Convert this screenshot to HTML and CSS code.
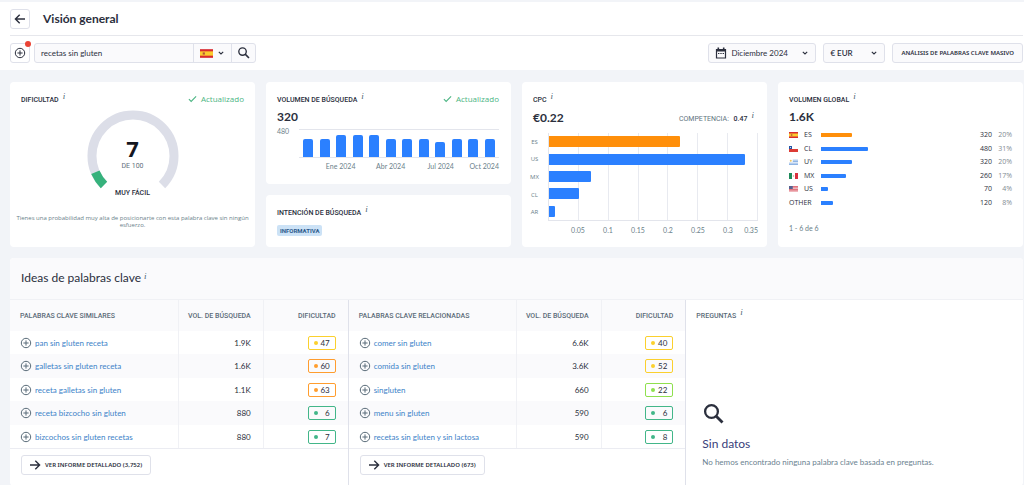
FILE: index.html
```html
<!DOCTYPE html>
<html lang="es">
<head>
<meta charset="utf-8">
<meta name="viewport" content="width=device-width, initial-scale=1">
<title>Visión general</title>
<link rel="stylesheet" href="styles.css">
</head>
<body>
<svg class="sprite" aria-hidden="true">
  <symbol id="plus" viewBox="0 0 12 12"><circle cx="6" cy="6" r="4.7" fill="none" stroke="currentColor"/><path d="M6 3.4v5.2M3.4 6h5.2" fill="none" stroke="currentColor"/></symbol>
  <symbol id="chev" viewBox="0 0 8 8"><path d="M1.8 2.8 4 5l2.2-2.2" fill="none" stroke="currentColor" stroke-width="1.1"/></symbol>
  <symbol id="lens" viewBox="0 0 24 24"><circle cx="9.5" cy="9.5" r="6.4" fill="none" stroke="currentColor" stroke-width="2.3"/><path d="m14 14 6.5 6.5" stroke="currentColor" stroke-width="2.8"/></symbol>
  <symbol id="check" viewBox="0 0 10 8"><path d="m1 4.2 2.5 2.5L9 1" fill="none" stroke="currentColor" stroke-width="1.2"/></symbol>
  <symbol id="arrow" viewBox="0 0 12 12"><path d="M1 6h9.5M6.3 1.7 10.6 6l-4.3 4.3" fill="none" stroke="currentColor" stroke-width="1.4"/></symbol>
  <symbol id="es" viewBox="0 0 12 8"><path fill="#d92b2f" d="M0 0h12v8H0z"/><path fill="#fbcb2f" d="M0 2h12v4H0z"/><path fill="#b5523a" d="M2.5 3h2v2h-2z"/></symbol>
  <symbol id="cl" viewBox="0 0 12 8"><path fill="#fff" d="M0 0h12v4H0z"/><path fill="#dc3b35" d="M0 4h12v4H0z"/><path fill="#2456a6" d="M0 0h4v4H0z"/><path fill="#fff" d="M1.6 1.3h1v1.4h-1z"/></symbol>
  <symbol id="uy" viewBox="0 0 12 8"><path fill="#fff" d="M0 0h12v8H0z"/><path fill="#6c9ddc" d="M5 1h7v1.1H5zM5 3h7v1.1H5zM0 5h12v1.1H0zM0 7h12v1H0z"/><circle cx="2.4" cy="2.3" r="1.3" fill="#f1c65b"/></symbol>
  <symbol id="mx" viewBox="0 0 12 8"><path fill="#fff" d="M0 0h12v8H0z"/><path fill="#1e8a5a" d="M0 0h4v8H0z"/><path fill="#d9303e" d="M8 0h4v8H8z"/><circle cx="6" cy="4" r="1" fill="#c9a37c"/></symbol>
  <symbol id="us" viewBox="0 0 12 8"><path fill="#f6d9dc" d="M0 0h12v8H0z"/><path fill="#d9525e" d="M0 0h12v1H0zM0 2h12v1H0zM0 4h12v1H0zM0 6h12v1H0z"/><path fill="#55618f" d="M0 0h5v4H0z"/></symbol>
</svg>

<header class="top">
  <div class="title-row">
    <button class="btn back" aria-label="Volver"><svg class="ic12 flip"><use href="#arrow"/></svg></button>
    <h1>Visión general</h1>
  </div>
  <div class="toolbar">
    <button class="btn add" aria-label="Añadir"><svg class="ic12"><use href="#plus"/></svg><span class="dot"></span></button>
    <form class="search">
      <input type="text" aria-label="Palabra clave" value="recetas sin gluten">
      <button type="button" class="country" aria-label="País" aria-haspopup="listbox"><svg class="flag"><use href="#es"/></svg><svg class="ic8"><use href="#chev"/></svg></button>
      <button type="button" class="go" aria-label="Buscar"><svg class="ic14"><use href="#lens"/></svg></button>
    </form>
    <label class="btn pick month">
      <svg class="ic12" viewBox="0 0 12 12"><path d="M1.5 2.5h9v8.5h-9z" fill="none" stroke="currentColor" stroke-width="1.2"/><path d="M1 2h10v2.6H1zM2.5.4h1.6v2H2.5zM7.9.4h1.6v2H7.9z" fill="currentColor"/><path d="M3 6.5h1.4M5.3 6.5h1.4M7.6 6.5H9" stroke="currentColor"/></svg>
      <select aria-label="Mes"><option>Diciembre 2024</option></select>
      <svg class="ic8"><use href="#chev"/></svg>
    </label>
    <label class="btn pick money">
      <select aria-label="Moneda"><option>€ EUR</option></select>
      <svg class="ic8"><use href="#chev"/></svg>
    </label>
    <button class="btn bulk">ANÁLISIS DE PALABRAS CLAVE MASIVO</button>
  </div>
</header>

<main>
  <section class="cards">
    <article class="card difficulty">
      <div class="card-head"><h2>DIFICULTAD<i class="info">i</i></h2><span class="fresh"><svg class="tick"><use href="#check"/></svg>Actualizado</span></div>
      <div class="gauge">
        <svg class="dial" viewBox="0 0 92 80">
          <path class="track" pathLength="100" d="M17 75A41 41 0 1 1 75 75"/>
          <path class="value" pathLength="100" d="M17 75A41 41 0 1 1 75 75"/>
        </svg>
        <div class="score"><strong>7</strong><span>DE 100</span></div>
      </div>
      <h3 class="grade">MUY FÁCIL</h3>
      <p class="note">Tienes una probabilidad muy alta de posicionarte con esta palabra clave sin ningún esfuerzo.</p>
    </article>

    <div class="stack">
      <article class="card volume">
        <div class="card-head"><h2>VOLUMEN DE BÚSQUEDA<i class="info">i</i></h2><span class="fresh"><svg class="tick"><use href="#check"/></svg>Actualizado</span></div>
        <strong class="big">320</strong>
        <div class="months">
          <span class="ymax">480</span>
          <div class="plot">
            <b class="m"></b><b class="m"></b><b class="m tall"></b><b class="m tall"></b><b class="m tall"></b><b class="m"></b><b class="m"></b><b class="m"></b><b class="m low"></b><b class="m"></b><b class="m"></b><b class="m"></b>
          </div>
          <div class="month-names"><span>Ene 2024</span><span>Abr 2024</span><span>Jul 2024</span><span class="end">Oct 2024</span></div>
        </div>
      </article>
      <article class="card intent">
        <h2>INTENCIÓN DE BÚSQUEDA<i class="info">i</i></h2>
        <span class="tag">INFORMATIVA</span>
      </article>
    </div>

    <article class="card cpc">
      <div class="card-head"><h2>CPC<i class="info">i</i></h2></div>
      <div class="cpc-line"><strong class="big">€0.22</strong><span class="comp">COMPETENCIA: <b>0.47</b><i class="info">i</i></span></div>
      <div class="hchart">
        <div class="names"><span>ES</span><span>US</span><span>MX</span><span>CL</span><span>AR</span></div>
        <div class="area">
          <b class="h hot" style="width:62.5%"></b><b class="h" style="width:94%"></b><b class="h" style="width:20%"></b><b class="h" style="width:14.3%"></b><b class="h" style="width:3%"></b>
        </div>
        <div class="ticks"><span>0.05</span><span>0.1</span><span>0.15</span><span>0.2</span><span>0.25</span><span>0.3</span><span>0.35</span></div>
      </div>
    </article>

    <article class="card global">
      <div class="card-head"><h2>VOLUMEN GLOBAL<i class="info">i</i></h2></div>
      <strong class="big">1.6K</strong>
      <ul class="countries">
        <li><svg class="mini"><use href="#es"/></svg><span>ES</span><div><b class="g hot" style="width:22%"></b></div><em>320</em><small>20%</small></li>
        <li><svg class="mini"><use href="#cl"/></svg><span>CL</span><div><b class="g" style="width:33%"></b></div><em>480</em><small>31%</small></li>
        <li><svg class="mini"><use href="#uy"/></svg><span>UY</span><div><b class="g" style="width:22%"></b></div><em>320</em><small>20%</small></li>
        <li><svg class="mini"><use href="#mx"/></svg><span>MX</span><div><b class="g" style="width:18%"></b></div><em>260</em><small>17%</small></li>
        <li><svg class="mini"><use href="#us"/></svg><span>US</span><div><b class="g" style="width:5%"></b></div><em>70</em><small>4%</small></li>
        <li><span class="other">OTHER</span><div><b class="g" style="width:8.3%"></b></div><em>120</em><small>8%</small></li>
      </ul>
      <p class="range">1 - 6 de 6</p>
    </article>
  </section>

  <section class="ideas">
    <h2 class="ideas-title">Ideas de palabras clave<i class="info">i</i></h2>
    <div class="panes">
      <div class="pane">
        <table>
          <thead><tr><th>PALABRAS CLAVE SIMILARES</th><th>VOL. DE BÚSQUEDA</th><th>DIFICULTAD</th></tr></thead>
          <tbody>
            <tr><td><a href="#"><svg class="ic12"><use href="#plus"/></svg>pan sin gluten receta</a></td><td>1.9K</td><td><span class="kd yellow">47</span></td></tr>
            <tr><td><a href="#"><svg class="ic12"><use href="#plus"/></svg>galletas sin gluten receta</a></td><td>1.6K</td><td><span class="kd orange">60</span></td></tr>
            <tr><td><a href="#"><svg class="ic12"><use href="#plus"/></svg>receta galletas sin gluten</a></td><td>1.1K</td><td><span class="kd orange">63</span></td></tr>
            <tr><td><a href="#"><svg class="ic12"><use href="#plus"/></svg>receta bizcocho sin gluten</a></td><td>880</td><td><span class="kd green">6</span></td></tr>
            <tr><td><a href="#"><svg class="ic12"><use href="#plus"/></svg>bizcochos sin gluten recetas</a></td><td>880</td><td><span class="kd green">7</span></td></tr>
          </tbody>
        </table>
        <div class="foot"><button class="btn report"><svg class="ic12"><use href="#arrow"/></svg>VER INFORME DETALLADO (3,752)</button></div>
      </div>
      <div class="pane">
        <table>
          <thead><tr><th>PALABRAS CLAVE RELACIONADAS</th><th>VOL. DE BÚSQUEDA</th><th>DIFICULTAD</th></tr></thead>
          <tbody>
            <tr><td><a href="#"><svg class="ic12"><use href="#plus"/></svg>comer sin gluten</a></td><td>6.6K</td><td><span class="kd yellow">40</span></td></tr>
            <tr><td><a href="#"><svg class="ic12"><use href="#plus"/></svg>comida sin gluten</a></td><td>3.6K</td><td><span class="kd yellow">52</span></td></tr>
            <tr><td><a href="#"><svg class="ic12"><use href="#plus"/></svg>singluten</a></td><td>660</td><td><span class="kd lime">22</span></td></tr>
            <tr><td><a href="#"><svg class="ic12"><use href="#plus"/></svg>menu sin gluten</a></td><td>590</td><td><span class="kd green">6</span></td></tr>
            <tr><td><a href="#"><svg class="ic12"><use href="#plus"/></svg>recetas sin gluten y sin lactosa</a></td><td>590</td><td><span class="kd green">8</span></td></tr>
          </tbody>
        </table>
        <div class="foot"><button class="btn report"><svg class="ic12"><use href="#arrow"/></svg>VER INFORME DETALLADO (673)</button></div>
      </div>
      <div class="pane questions">
        <h3>PREGUNTAS<i class="info">i</i></h3>
        <div class="empty">
          <svg class="ic24"><use href="#lens"/></svg>
          <h4>Sin datos</h4>
          <p>No hemos encontrado ninguna palabra clave basada en preguntas.</p>
        </div>
      </div>
    </div>
  </section>
</main>
</body>
</html>
```
FILE: styles.css
```css
* { box-sizing: border-box; }
:root { --label: Roboto, "Noto Sans", sans-serif; --data: "Open Sans", "Noto Sans", sans-serif; }
body {
  margin: 0;
  background: #f2f4f8;
  color: #2b2f3d;
  font: 8px/12px Lato, "Noto Sans", sans-serif;
}
h1, h2, h3, h4, p, ul { margin: 0; padding: 0; }
button, input, select { font: inherit; color: inherit; margin: 0; }
svg { flex: none; display: block; }
.sprite { position: absolute; width: 0; height: 0; }
.ic8 { width: 8px; height: 8px; }
.ic12 { width: 12px; height: 12px; }
.ic14 { width: 14px; height: 14px; }
.ic24 { width: 24px; height: 24px; }
.flip { transform: rotate(180deg); }

.btn {
  display: flex;
  align-items: center;
  height: 20px;
  padding: 0;
  border: 1px solid #dfe1ea;
  border-radius: 3px;
  background: #fff;
}
.info {
  margin-left: 4px;
  color: #4d6573;
  font: italic 9px/7px "Liberation Serif", serif;
  vertical-align: 3px;
}

.top { margin-top: 2px; padding: 0 1px 0 10px; background: #fff; }
.title-row {
  display: flex;
  align-items: center;
  gap: 13px;
  height: 34px;
  border-bottom: 1px solid #e6e7ec;
}
.back { width: 20px; justify-content: center; }
h1 { font-size: 12px; line-height: 16px; font-weight: 700; }
.toolbar { display: flex; align-items: center; height: 34px; }
.add { position: relative; width: 20px; justify-content: center; }
.dot {
  position: absolute;
  top: -3px;
  right: -2px;
  width: 6px;
  height: 6px;
  border-radius: 50%;
  background: #ea4335;
}
.search {
  display: flex;
  width: 222px;
  height: 20px;
  margin: 0 auto 0 4px;
  border: 1px solid #dfe1ea;
  border-radius: 3px;
  background: #fafafc;
}
.search input { flex: 1; min-width: 0; padding: 0 6px; border: 0; background: none; outline: 0; }
.search button { display: flex; align-items: center; justify-content: center; padding: 0; border: 0; border-left: 1px solid #dfe1ea; background: none; }
.country { width: 38px; gap: 4px; }
.go { width: 24px; }
.flag { width: 13px; height: 9px; }
.pick { background: #fafafc; padding: 0 6px; gap: 4px; }
.pick select { flex: 1; min-width: 0; padding: 0; border: 0; background: none; appearance: none; }
.month { width: 108px; }
.money { width: 62px; margin: 0 7px; font-weight: 600; }
.bulk { padding: 0 8px; background: #fafafc; font: 600 6px/12px "Noto Sans", sans-serif; }

main { padding: 12px 1px 0 10px; }
.cards { display: grid; grid-template-columns: repeat(4, 1fr); gap: 11px; }
.card { padding: 11px; border-radius: 4px; background: #fff; }
.card-head { display: flex; justify-content: space-between; height: 12px; }
.card h2, .questions h3 { font: 500 7px/12px var(--label); }
.fresh { display: flex; align-items: center; gap: 4px; color: #4bb583; font: 8px/12px var(--data); }
.tick { width: 9px; height: 8px; }
.big { display: block; font-size: 12px; line-height: 16px; font-weight: 700; }

.difficulty { display: flex; flex-direction: column; text-align: center; padding: 11px 7px; }
.difficulty .card-head { padding: 0 4px; }
.gauge { display: grid; justify-items: center; margin-top: 5px; }
.gauge > * { grid-area: 1 / 1; }
.dial { width: 92px; height: 80px; fill: none; stroke-width: 9; }
.track { stroke: #dcdee8; }
.value { stroke: #36b27c; stroke-dasharray: 8 100; }
.score { align-self: center; display: flex; flex-direction: column; padding-top: 8px; color: #5f6f7c; font: 7px/12px var(--label); }
.score strong { color: #14161f; font: 700 22px/24px "Noto Sans", sans-serif; }
.card .grade { margin-top: -2px; font: 500 7px/10px var(--label); }
.note { margin: 17px -4px 0; color: #6b7f8a; font: 6px/7px var(--data); }

.stack { display: flex; flex-direction: column; gap: 11px; }
.volume { flex: 1; padding-right: 12px; }
.volume .big, .global .big { margin-top: 4px; }
.months { display: grid; grid-template-columns: 22px 1fr; margin-top: 4px; color: #6b7f8a; font-size: 7px; }
.ymax { line-height: 8px; margin-top: -2px; }
.plot {
  display: flex;
  align-items: flex-end;
  justify-content: space-between;
  height: 29px;
  padding: 0 4px;
  border: solid #e3e5ec;
  border-width: 1px 0;
}
.m { width: 10px; height: 18px; border-radius: 2px 2px 0 0; background: #2b80ff; }
.m.tall { height: 22px; }
.m.low { height: 15px; }
.month-names { grid-column: 2; display: grid; grid-template-columns: 1fr repeat(3, 3fr) 2fr; margin-top: 2px; text-align: center; white-space: nowrap; }
.month-names span:first-child { grid-column: 2; }
.month-names .end { justify-self: end; }
.intent { height: 52px; }
.tag { display: block; width: fit-content; margin-top: 6px; padding: 0 3px; border-radius: 2px; background: #cce2f6; color: #2d5a8c; font: 700 6px/11px var(--label); }

.cpc { padding-right: 9px; }
.cpc-line { display: flex; justify-content: space-between; align-items: center; margin-top: 5px; }
.comp { padding-right: 4px; color: #5f7480; font: 7px/12px var(--label); }
.comp b { margin-left: 3px; color: #2b2f3d; font-weight: 500; }
.hchart { display: grid; grid-template-columns: 15px 1fr; margin-top: 7px; color: #6b7f8a; font-size: 7px; }
.names, .area { display: grid; grid-template-rows: repeat(5, 1fr); align-items: center; height: 88px; }
.names { justify-items: center; margin: 0 8px 0 -4px; font: 6px/12px var(--data); }
.area {
  border: solid #e3e5ec;
  border-width: 0 0 1px 1px;
  background: repeating-linear-gradient(90deg, transparent 0 calc(100% / 7 - 1px), #e8eaf0 calc(100% / 7 - 1px) calc(100% / 7));
}
.h { height: 11px; border-radius: 0 1px 1px 0; background: #2b80ff; }
.hot.hot { background: #ff8f0a; }
.ticks { grid-column: 2; display: grid; grid-template-columns: 1fr repeat(6, 2fr) 1fr; margin-top: 3px; text-align: center; }
.ticks span { min-width: 0; }
.ticks span:first-child { grid-column: 2; }
.ticks span:last-child { justify-self: end; }

.global { padding-bottom: 13px; }
.countries { margin-top: 3px; list-style: none; font: 7px/12px var(--data); }
.countries li { display: grid; grid-template-columns: 9px 17px 1fr 30px 20px; align-items: center; height: 14px; }
.countries li:nth-child(even) { height: 13px; }
.mini { width: 9px; height: 6px; }
.countries span { padding-left: 6px; }
.countries .other { grid-column: span 2; padding: 0; }
.countries li div { padding-left: 6px; }
.g { display: block; height: 4px; border-radius: 0 1px 1px 0; background: #2b80ff; }
.countries em { font-style: normal; text-align: right; }
.countries small { color: #7f8b92; font-size: inherit; text-align: right; }
.range { margin-top: 13px; color: #6b7f8a; font-size: 7px; }

.ideas { margin-top: 11px; border-radius: 4px; background: #fff; overflow: hidden; }
.ideas-title { padding: 12px 11px 13px; background: #fafafc; font-size: 12px; line-height: 16px; font-weight: 400; border-bottom: 1px solid #f0f1f5; }
.ideas-title .info { margin-left: 3px; }
.panes { display: grid; grid-template-columns: repeat(3, 1fr); }
.pane + .pane { border-left: 1px solid #dfe1ea; }
table { width: 100%; table-layout: fixed; border-collapse: collapse; }
th, td { padding: 0 12px 0 10px; text-align: right; white-space: nowrap; }
th:first-child, td:first-child { width: 50%; text-align: left; }
th + th, td + td { border-left: 1px solid #f0f1f5; }
th + th { padding-left: 0; }
th { height: 31px; background: #fafafc; color: #5b6b78; font: 500 7px/12px var(--label); }
td { height: 23px; }
tr:nth-child(even) td { height: 24px; background: #fafafc; }
td a { display: flex; align-items: center; gap: 3px; color: #3c82c8; text-decoration: none; }
td a svg { color: #596b78; }
.kd { display: inline-flex; align-items: center; justify-content: space-between; width: 28px; height: 14px; padding: 0 5px; border: 1px solid var(--c); border-radius: 2px; vertical-align: middle; }
.kd::before { content: ""; width: 4px; height: 4px; border-radius: 50%; background: var(--c); }
.yellow { --c: #fbd02d; }
.orange { --c: #ff9d2e; }
.green { --c: #42b689; }
.lime { --c: #8fe04e; }
.foot { padding: 6px 11px 11px; border-top: 1px solid #ebecf2; }
.report { padding: 0 8px 0 7px; gap: 4px; font: 600 6px/12px "Noto Sans", sans-serif; }

.questions { padding: 9px 10px; }
.questions h3 { color: #5b6b78; }
.empty { padding: 80px 6px 0; }
.empty h4 { margin-top: 10px; color: #39407a; font-size: 12px; line-height: 16px; font-weight: 400; }
.empty p { margin-top: 4px; color: #6b8290; }
```
